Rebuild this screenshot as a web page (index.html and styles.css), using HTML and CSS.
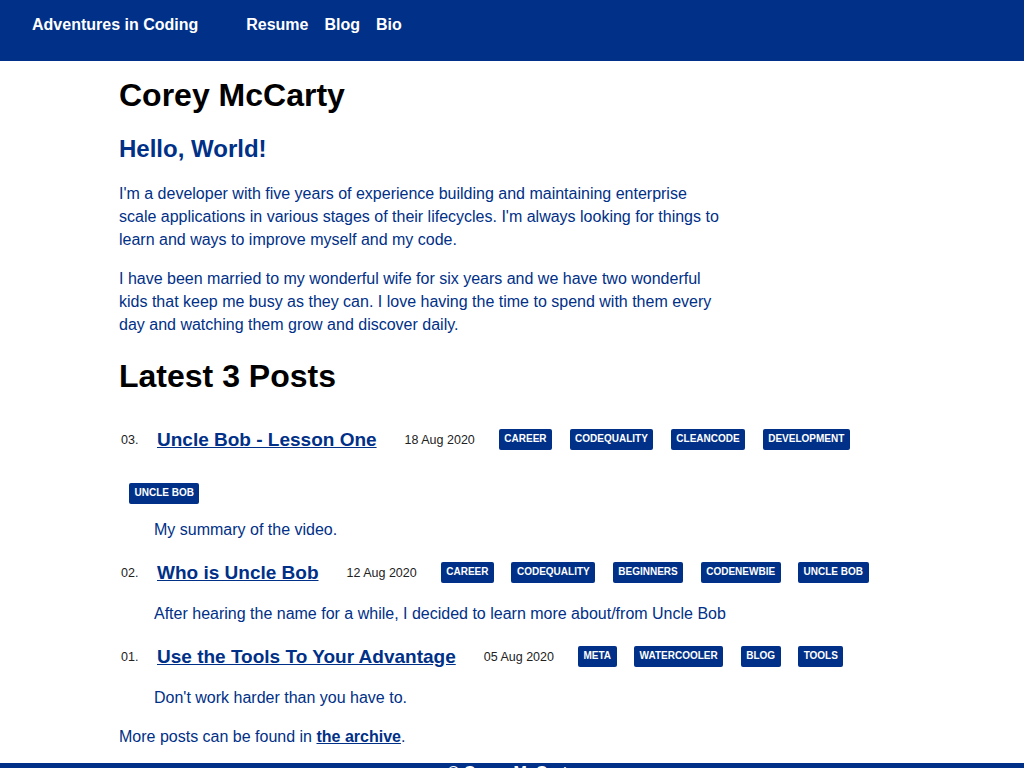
FILE: index.html
```html
<!DOCTYPE html>
<html lang="en">
<head>
<meta charset="utf-8">
<title>Corey McCarty</title>
<link rel="stylesheet" href="styles.css">
</head>
<body>
<header class="site-header">
  <a class="brand" href="#">Adventures in Coding</a>
  <nav class="nav">
    <a href="#">Resume</a>
    <a href="#">Blog</a>
    <a href="#">Bio</a>
  </nav>
</header>
<main class="content">
  <h1 class="page-title">Corey McCarty</h1>
  <h2 class="greeting">Hello, World!</h2>
  <p class="intro">I'm a developer with five years of experience building and maintaining enterprise scale applications in various stages of their lifecycles. I'm always looking for things to learn and ways to improve myself and my code.</p>
  <p class="intro">I have been married to my wonderful wife for six years and we have two wonderful kids that keep me busy as they can. I love having the time to spend with them every day and watching them grow and discover daily.</p>

  <h1 class="section-title">Latest 3 Posts</h1>
  <div class="posts">
    <div class="post">
      <div class="post-head">
        <span class="post-num">03.</span>
        <a class="post-title" href="#">Uncle Bob - Lesson One</a>
        <span class="post-date">18 Aug 2020</span>
        <span class="tag">career</span>
        <span class="tag">codequality</span>
        <span class="tag">cleancode</span>
        <span class="tag">development</span>
        <span class="tag">uncle bob</span>
      </div>
      <p class="summary">My summary of the video.</p>
    </div>
    <div class="post">
      <div class="post-head">
        <span class="post-num">02.</span>
        <a class="post-title" href="#">Who is Uncle Bob</a>
        <span class="post-date">12 Aug 2020</span>
        <span class="tag">career</span>
        <span class="tag">codequality</span>
        <span class="tag">beginners</span>
        <span class="tag">codenewbie</span>
        <span class="tag">uncle bob</span>
      </div>
      <p class="summary">After hearing the name for a while, I decided to learn more about/from Uncle Bob</p>
    </div>
    <div class="post">
      <div class="post-head">
        <span class="post-num">01.</span>
        <a class="post-title" href="#">Use the Tools To Your Advantage</a>
        <span class="post-date">05 Aug 2020</span>
        <span class="tag">meta</span>
        <span class="tag">watercooler</span>
        <span class="tag">blog</span>
        <span class="tag">tools</span>
      </div>
      <p class="summary">Don't work harder than you have to.</p>
    </div>
  </div>
  <p class="more">More posts can be found in <a href="#">the archive</a>.</p>
</main>
<footer class="site-footer">© Corey McCarty</footer>
</body>
</html>
```

FILE: styles.css
```css
* { box-sizing: border-box; }

html, body {
  margin: 0;
  padding: 0;
}

body {
  font-family: "Liberation Sans", Arial, Helvetica, sans-serif;
  font-size: 16px;
  color: #003087;
  background: #ffffff;
}

a { color: inherit; }

.site-header {
  height: 61px;
  background: #003087;
  padding: 15px 32px 0;
  display: flex;
  align-items: flex-start;
  line-height: 20px;
}

.brand {
  color: #ffffff;
  font-weight: bold;
  font-size: 16px;
  text-decoration: none;
  margin-right: 48px;
}

.nav {
  display: flex;
  gap: 16px;
}

.nav a {
  color: #ffffff;
  font-weight: bold;
  font-size: 16px;
  text-decoration: none;
}

.content {
  padding: 16px 119px 0;
}

.page-title {
  margin: 0;
  font-size: 32px;
  line-height: 37px;
  color: #000000;
}

.greeting {
  margin: 21px 0 0;
  font-size: 24px;
  line-height: 28px;
  color: #003087;
}

.intro {
  max-width: 604px;
  margin: 19px 0 0;
  line-height: 23px;
}

.intro + .intro {
  margin-top: 16px;
}

.section-title {
  margin: 22px 0 0;
  font-size: 32px;
  line-height: 37px;
  color: #000000;
}

.posts {
  margin-top: 29px;
}

.post-head {
  display: flex;
  flex-wrap: wrap;
  align-items: center;
  row-gap: 28px;
  margin-bottom: 14px;
}

.post-num {
  width: 38px;
  padding-left: 2px;
  font-size: 12.5px;
  color: #222222;
}

.post-title {
  font-size: 19px;
  line-height: 31px;
  font-weight: bold;
  color: #003087;
  text-decoration: underline;
  margin-right: 28px;
}

.post-date {
  font-size: 12.5px;
  color: #222222;
  margin-right: 14px;
}

.tag {
  display: inline-block;
  background: #003087;
  color: #ffffff;
  font-size: 10px;
  font-weight: bold;
  text-transform: uppercase;
  line-height: 12px;
  padding: 4px 5.5px 5px;
  border-radius: 2px;
  margin: 0 7.5px 0 10px;
}

.summary {
  margin: 0 0 16px 35px;
  line-height: 23px;
}

.more {
  margin: 0;
  padding-bottom: 15px;
  line-height: 23px;
}

.more a {
  font-weight: bold;
  text-decoration: underline;
}

.site-footer {
  background: #003087;
  color: #ffffff;
  font-weight: bold;
  text-align: center;
  line-height: 20px;
  padding: 0 0 12px;
}
```
